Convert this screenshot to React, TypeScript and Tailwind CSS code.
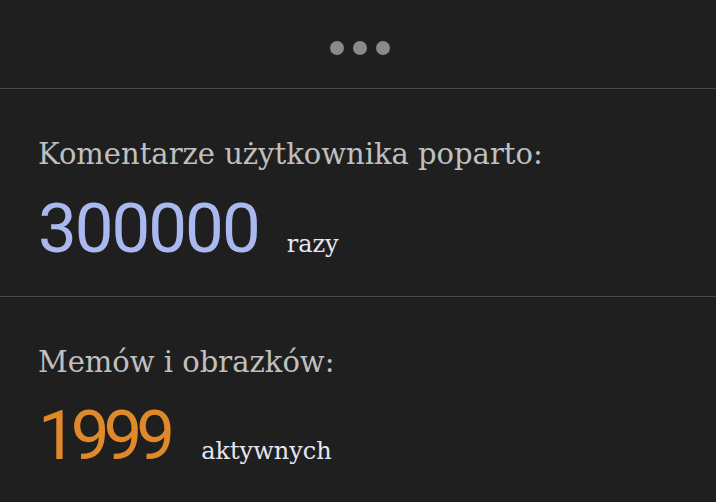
export default function App() {
  const slab = { fontFamily: '"DejaVu Serif", "Liberation Serif", serif' };
  const sans = { fontFamily: 'Roboto, "Liberation Sans", sans-serif' };
  return (
    <div className="w-[716px] h-[502px] bg-[#1f1f1f] overflow-hidden flex flex-col">
      <div className="h-[89px] flex items-center justify-center gap-[9px] pt-[7px] pl-[4px] border-b border-[#4a4a4a] shrink-0">
        <span className="w-[14px] h-[14px] rounded-full bg-[#8a8a8a]" />
        <span className="w-[14px] h-[14px] rounded-full bg-[#8a8a8a]" />
        <span className="w-[14px] h-[14px] rounded-full bg-[#8a8a8a]" />
      </div>
      <div className="h-[208px] border-b border-[#4a4a4a] px-[38px] pt-[47px] shrink-0">
        <div style={slab} className="text-[29px] leading-[36px] text-[#c0c0c0]">Komentarze użytkownika poparto:</div>
        <div className="flex items-baseline mt-[21px]">
          <span style={sans} className="text-[69px] leading-[72px] tracking-[-2px] text-[#a9b8ee]">300000</span>
          <span style={slab} className="text-[24px] ml-[28px] text-[#e4e7f3]">razy</span>
        </div>
      </div>
      <div className="flex-1 px-[38px] pt-[47px]">
        <div style={slab} className="text-[29px] leading-[36px] text-[#c0c0c0]">Memów i obrazków:</div>
        <div className="flex items-baseline mt-[20px]">
          <span style={sans} className="text-[69px] leading-[72px] tracking-[-6px] text-[#e0892b]">1999</span>
          <span style={slab} className="text-[24px] ml-[32px] text-[#e4e7f3]">aktywnych</span>
        </div>
      </div>
    </div>
  );
}
